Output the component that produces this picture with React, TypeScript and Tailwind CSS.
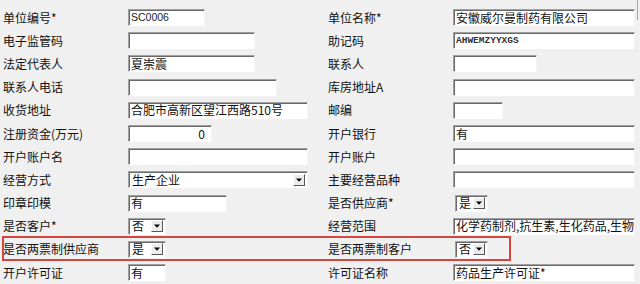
import React from "react";

type Field =
  | { kind: "text"; value: string; w: string; right?: boolean; mono?: boolean; latin?: boolean }
  | { kind: "select"; value: string; w: string };

type Row = { label: string; field: Field };

const left: Row[] = [
  { label: "单位编号*", field: { kind: "text", value: "SC0006", w: "w-[77px]", latin: true } },
  { label: "电子监管码", field: { kind: "text", value: "", w: "w-[127px]" } },
  { label: "法定代表人", field: { kind: "text", value: "夏崇震", w: "w-[127px]" } },
  { label: "联系人电话", field: { kind: "text", value: "", w: "w-[149px]" } },
  { label: "收货地址", field: { kind: "text", value: "合肥市高新区望江西路510号", w: "w-[180px]" } },
  { label: "注册资金(万元)", field: { kind: "text", value: "0", w: "w-[84px]", right: true } },
  { label: "开户账户名", field: { kind: "text", value: "", w: "w-[180px]" } },
  { label: "经营方式", field: { kind: "select", value: "生产企业", w: "w-[180px]" } },
  { label: "印章印模", field: { kind: "text", value: "有", w: "w-[99px]" } },
  { label: "是否客户*", field: { kind: "select", value: "否", w: "w-[38px]" } },
  { label: "是否两票制供应商", field: { kind: "select", value: "是", w: "w-[38px]" } },
  { label: "开户许可证", field: { kind: "text", value: "有", w: "w-[38px]" } },
];

const right: Row[] = [
  { label: "单位名称*", field: { kind: "text", value: "安徽威尔曼制药有限公司", w: "w-[182px]" } },
  { label: "助记码", field: { kind: "text", value: "AHWEMZYYXGS", w: "w-[182px]", mono: true } },
  { label: "联系人", field: { kind: "text", value: "", w: "w-[84px]" } },
  { label: "库房地址A", field: { kind: "text", value: "", w: "w-[182px]" } },
  { label: "邮编", field: { kind: "text", value: "", w: "w-[50px]" } },
  { label: "开户银行", field: { kind: "text", value: "有", w: "w-[182px]" } },
  { label: "开户账户", field: { kind: "text", value: "", w: "w-[182px]" } },
  { label: "主要经营品种", field: { kind: "text", value: "", w: "w-[182px]" } },
  { label: "是否供应商*", field: { kind: "select", value: "是", w: "w-[33px]" } },
  { label: "经营范围", field: { kind: "text", value: "化学药制剂,抗生素,生化药品,生物制品", w: "w-[182px]" } },
  { label: "是否两票制客户", field: { kind: "select", value: "否", w: "w-[33px]" } },
  { label: "许可证名称", field: { kind: "text", value: "药品生产许可证*", w: "w-[182px]" } },
];

const boxBase =
  "h-[17px] bg-white border border-t-[#a0a0a0] border-l-[#a0a0a0] border-b-white border-r-[#f4f4f4] shadow-[inset_1px_1px_0_#696969] flex items-center overflow-hidden whitespace-nowrap leading-none";

function FieldBox({ f }: { f: Field }) {
  if (f.kind === "select") {
    return (
      <div className={`${boxBase} ${f.w} pl-[3px] pr-[2px]`}>
        <span className="text-[12px] text-[#111]">{f.value}</span>
        <div className="ml-auto w-[12px] h-[12px] bg-[#ececec] border border-t-white border-l-white border-b-[#555] border-r-[#555] flex items-center justify-center">
          <svg width="6" height="4" viewBox="0 0 6 4">
            <path d="M0 0.5h6L3 3.8z" fill="#000" />
          </svg>
        </div>
      </div>
    );
  }
  const font = f.mono
    ? "font-['Liberation_Mono',monospace] text-[9.5px] font-bold text-[#333]"
    : f.latin
    ? "font-['Liberation_Sans',sans-serif] text-[10.5px] text-[#222]"
    : "text-[12px] text-[#111]";
  return (
    <div className={`${boxBase} ${f.w} ${f.right ? "justify-end pr-[6px]" : "pl-[2px]"}`}>
      <span className={font}>{f.value}</span>
    </div>
  );
}

export default function App() {
  const cells: React.ReactNode[] = [];
  left.forEach((l, i) => {
    const r = right[i];
    cells.push(
      <div key={`ll${i}`} className="flex items-center pl-[3px] text-[12px] text-[#111] whitespace-nowrap">
        {l.label}
      </div>
    );
    cells.push(
      <div key={`lf${i}`} className="flex items-center">
        <FieldBox f={l.field} />
      </div>
    );
    cells.push(
      <div key={`rl${i}`} className="flex items-center text-[12px] text-[#111] whitespace-nowrap">
        {r.label}
      </div>
    );
    cells.push(
      <div key={`rf${i}`} className={`flex items-center ${r.field.kind === "select" ? "pl-[2px]" : ""}`}>
        <FieldBox f={r.field} />
      </div>
    );
  });

  return (
    <div className="relative w-[640px] h-[284px] overflow-hidden bg-[#f0f0f0] font-['Noto_Sans_CJK_SC','Noto_Sans',sans-serif]">
      <div className="grid grid-cols-[128px_200px_125px_187px] auto-rows-[23.2px] pt-[6px]">
        {cells}
      </div>
      <div className="absolute left-[2px] top-[236px] w-[509px] h-[25px] border-2 border-[#d4463e] pointer-events-none" />
      <div className="absolute right-[2px] top-0 w-[1px] h-[20px] bg-[#a8a8a8]" />
    </div>
  );
}
